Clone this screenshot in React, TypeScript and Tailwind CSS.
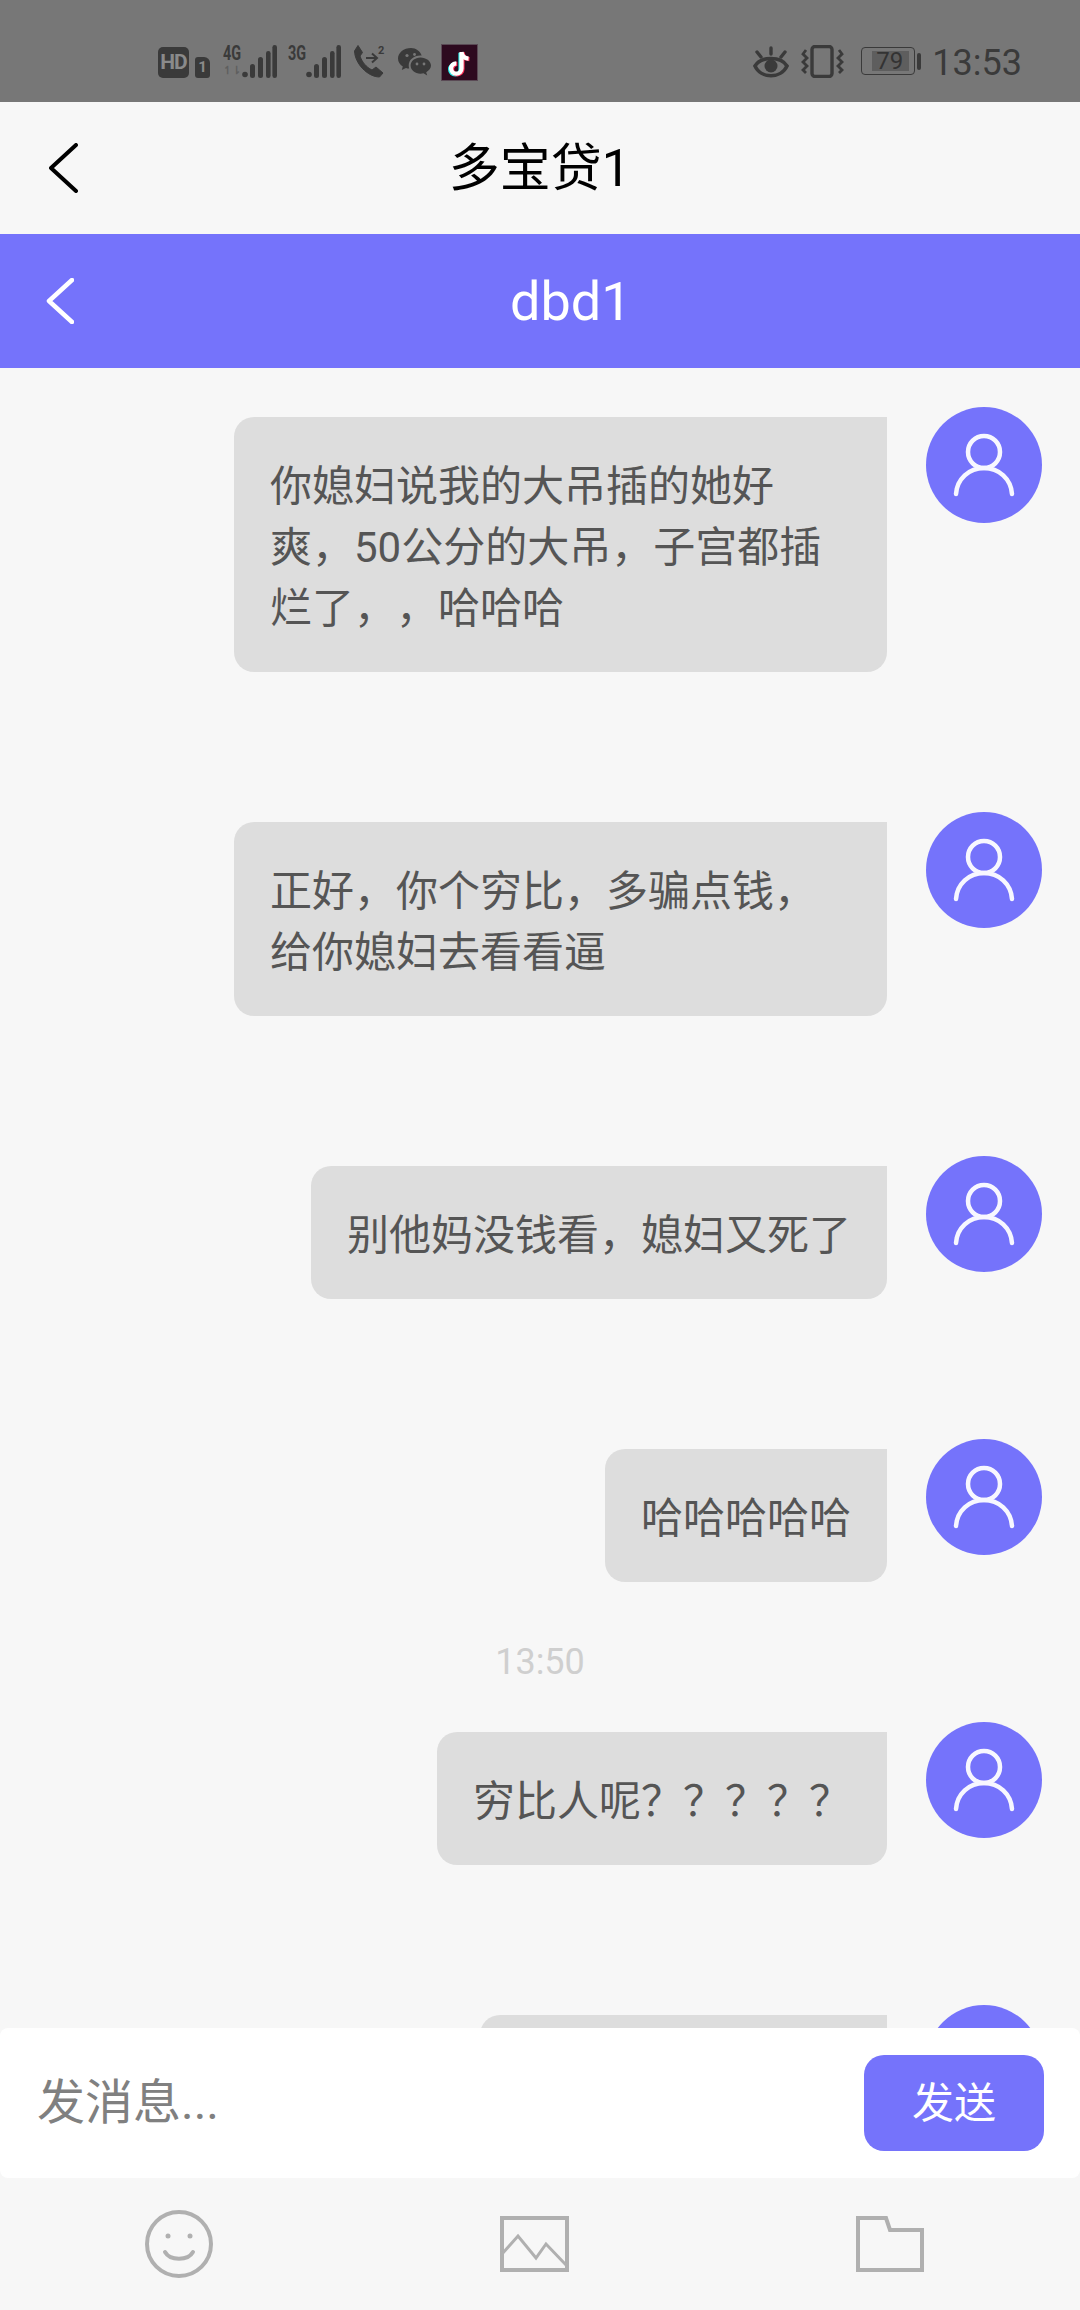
const font = { fontFamily: '"Roboto", "Noto Sans CJK SC", sans-serif' };

function Avatar() {
  return (
    <div className="w-[116px] h-[116px] rounded-full bg-[#7573fb] shrink-0">
      <svg viewBox="0 0 116 116" className="w-full h-full" fill="none" stroke="#f7f7ff" strokeWidth="4.5" strokeLinecap="round">
        <circle cx="58" cy="45" r="16" />
        <path d="M30 87C31 72 43 61 58 61C73 61 85 72 86 87" />
      </svg>
    </div>
  );
}

function Row({ className, bubble, children }: { className: string; bubble: string; children?: React.ReactNode }) {
  return (
    <div className={`flex justify-end items-start gap-[39px] pr-[38px] ${className}`}>
      <div className={`mt-[10px] bg-[#dddddd] rounded-[20px] rounded-tr-none px-[36px] pt-[39px] pb-[33px] text-[42px] leading-[61px] text-[#555555] whitespace-nowrap [font-feature-settings:'chws'_0] [text-spacing-trim:space-all] ${bubble}`}>
        {children}
      </div>
      <Avatar />
    </div>
  );
}

function Bars({ className }: { className: string }) {
  return (
    <svg viewBox="0 0 35 33" className={className} fill="#3a3a3a">
      <circle cx="3" cy="29.5" r="2.8" />
      <rect x="8" y="19" width="5" height="14" rx="2.5" />
      <rect x="16" y="12" width="5" height="21" rx="2.5" />
      <rect x="24" y="6" width="4.6" height="27" rx="2.3" />
      <rect x="30.4" y="0" width="4.6" height="33" rx="2.3" />
    </svg>
  );
}

function StatusBar() {
  return (
    <div className="h-[102px] bg-[#777777] flex justify-between items-start pl-[158px] pr-[58px] pt-[44px] text-[#3a3a3a]">
      <div className="flex items-start">
        <div className="w-[31px] h-[31px] mt-[3px] rounded-[5px] bg-[#3a3a3a] flex items-center justify-center text-[21px] tracking-[-1px] leading-none font-bold text-[#8a8a8a]">HD</div>
        <div className="w-[15px] h-[21px] mt-[13px] ml-[6px] rounded-[3px] rounded-tr-[6px] bg-[#3a3a3a] flex items-center justify-center text-[15px] leading-none font-bold text-[#8a8a8a]">1</div>
        <div className="ml-[13px] w-[18px] mt-[1px]">
          <div className="text-[20px] leading-[16px] font-bold scale-x-[0.72] origin-left whitespace-nowrap">4G</div>
          <div className="text-[11px] leading-[15px] mt-[2px] font-bold text-[#5f5f5f]">↿⇂</div>
        </div>
        <Bars className="w-[35px] h-[33px] mt-[1px] ml-[1px]" />
        <div className="ml-[11px] w-[18px] mt-[1px] text-[20px] leading-[16px] font-bold scale-x-[0.72] origin-left whitespace-nowrap">3G</div>
        <Bars className="w-[35px] h-[33px] mt-[1px]" />
        <svg viewBox="0 0 32 35" className="w-[32px] h-[35px] ml-[12px]" fill="none" stroke="#3a3a3a">
          <path d="M5 1.5L9.5 8.5L7 12C9 18 13 23 19 26L23 23L30 29L26.5 33C15 33 2 20 1.5 7Z" fill="#3a3a3a" strokeWidth="1" strokeLinejoin="round" />
          <path d="M13 14H23M19 9.5L24 14L19 18.5" strokeWidth="2" />
          <text x="25" y="10" fontSize="11" fill="#3a3a3a" stroke="none" fontWeight="bold">2</text>
        </svg>
        <svg viewBox="0 0 33 29" className="w-[33px] h-[29px] ml-[13px] mt-[4px]" fill="#3a3a3a">
          <path d="M13 0C5.8 0 0 4.7 0 10.5C0 13.8 1.9 16.7 4.8 18.6L3.8 22L8 19.9C9 20.2 10.1 20.4 11.2 20.5C10.9 19.5 10.7 18.5 10.7 17.5C10.7 11.9 15.8 7.5 22.3 7.5C22.8 7.5 23.3 7.5 23.7 7.6C22.2 3.2 18 0 13 0Z" />
          <path d="M22.5 9.5C17 9.5 12.6 13.1 12.6 17.6C12.6 22.1 17 25.7 22.5 25.7C23.5 25.7 24.6 25.5 25.5 25.3L29.2 27.5L28.2 24.2C31 22.7 33 20.3 33 17.6C33 13.1 28 9.5 22.5 9.5Z" />
          <circle cx="9" cy="7.5" r="1.6" fill="#777777" />
          <circle cx="16.5" cy="6.5" r="1.4" fill="#777777" />
          <circle cx="19" cy="16" r="1.4" fill="#777777" />
          <circle cx="26" cy="16" r="1.4" fill="#777777" />
        </svg>
        <div className="w-[37px] h-[37px] ml-[10px] bg-[#2d0a1f] border border-[#5a4a55] flex items-center justify-center">
          <svg viewBox="0 0 24 28" className="w-[25px] h-[28px]" fill="none" strokeWidth="4.2">
            <path d="M14 3V19.5A5.2 5.2 0 1 1 8.8 14.3" stroke="#25f4ee" transform="translate(-1 0.8)" />
            <path d="M14 3C14.5 7 17 9.3 21 9.6" stroke="#fe2c55" transform="translate(1 0.6)" />
            <path d="M14 3V19.5A5.2 5.2 0 1 1 8.8 14.3" stroke="#fe2c55" transform="translate(1 0.6)" />
            <path d="M14 3V19.5A5.2 5.2 0 1 1 8.8 14.3M14 3C14.5 7 17 9.3 21 9.6" stroke="#ffffff" />
          </svg>
        </div>
      </div>
      <div className="flex items-start">
        <svg viewBox="0 0 36 32" className="w-[36px] h-[32px] mt-[2px]" fill="none" stroke="#3a3a3a" strokeWidth="3.4" strokeLinecap="round">
          <path d="M2 20C8 10 28 10 34 20C28 33 8 33 2 20Z" strokeWidth="3.6" />
          <circle cx="18" cy="20" r="6.5" fill="#3a3a3a" stroke="none" />
          <path d="M18 2V8M4 6L8 11M32 6L28 11" />
        </svg>
        <svg viewBox="0 0 43 33" className="w-[43px] h-[33px] ml-[12px] mt-[1px]" fill="none" stroke="#3a3a3a">
          <rect x="11" y="1.5" width="20" height="30" rx="3" strokeWidth="3.4" />
          <path d="M5 5L2 9L6 13L2 17L6 21L2 25L5 28M38 5L41 9L37 13L41 17L37 21L41 25L38 28" strokeWidth="2.8" />
        </svg>
        <div className="ml-[17px] mt-[3px] w-[54px] h-[28px] rounded-[4px] border border-[#3a3a3a] relative">
          <div className="absolute left-[10px] top-[3px] bottom-[3px] w-[37px] bg-[#5e5e5e]" />
          <div className="absolute inset-0 pl-[14px] text-[24px] leading-[26px] text-[#333333]">79</div>
        </div>
        <div className="ml-[2px] mt-[9px] w-[4px] h-[17px] rounded-[2px] bg-[#3a3a3a]" />
        <div className="ml-[11px] text-[36px] leading-[38px] text-[#3a3a3a]">13:53</div>
      </div>
    </div>
  );
}

export default function App() {
  return (
    <div style={font} className="w-[1080px] h-[2310px] bg-[#f7f7f7] flex flex-col overflow-hidden">
      <StatusBar />
      <div className="h-[132px] shrink-0 grid grid-cols-[1fr_auto_1fr] items-center pl-[49px] text-black">
        <svg viewBox="0 0 29 50" className="w-[29px] h-[50px]" fill="none" stroke="#000" strokeWidth="4" strokeLinecap="round" strokeLinejoin="round">
          <path d="M27 2L2 25L27 48" />
        </svg>
        <div className="text-[51px] leading-none -translate-x-[25px]">多宝贷1</div>
        <div />
      </div>
      <div className="h-[134px] shrink-0 bg-[#7573fb] flex items-center pl-[46px] text-white">
        <svg viewBox="0 0 28 46" className="w-[28px] h-[46px]" fill="none" stroke="#fff" strokeWidth="4.5" strokeLinecap="round" strokeLinejoin="round">
          <path d="M26 2L3 23L26 44" />
        </svg>
        <div className="ml-[436px] mt-[2px] text-[54px] leading-none">dbd1</div>
      </div>
      <div className="flex-1 min-h-0 overflow-hidden pt-[39px]">
        <Row className="mb-[140px]" bubble="w-[653px]">
          你媳妇说我的大吊插的她好<br />爽，50公分的大吊，子宫都插<br />烂了，，哈哈哈
        </Row>
        <Row className="mb-[140px]" bubble="w-[653px]">
          正好，你个穷比，多骗点钱，<br />给你媳妇去看看逼
        </Row>
        <Row className="mb-[140px]" bubble="">别他妈没钱看，媳妇又死了</Row>
        <Row className="mb-[60px]" bubble="">哈哈哈哈哈</Row>
        <div className="h-[40px] mb-[40px] text-center text-[36px] leading-[40px] text-[#cfcfcf]">13:50</div>
        <Row className="mb-[140px]" bubble="">穷比人呢？？？？？</Row>
        <Row className="" bubble="w-[407px] h-[133px]" />
      </div>
      <div className="h-[150px] shrink-0 bg-white rounded-[8px] flex items-center justify-between pl-[37px] pr-[36px]">
        <div className="text-[48px] leading-none text-[#808080]">发消息...</div>
        <div className="w-[180px] h-[96px] rounded-[20px] bg-[#7573fb] flex items-center justify-center text-[42px] text-white">发送</div>
      </div>
      <div className="h-[132px] shrink-0 flex justify-between items-center pl-[145px] pr-[156px]">
        <svg viewBox="0 0 68 68" className="w-[68px] h-[68px]" fill="none" stroke="#b0b0b0" strokeWidth="4">
          <circle cx="34" cy="34" r="32" />
          <circle cx="23" cy="26" r="2.5" fill="#b0b0b0" stroke="none" />
          <circle cx="45" cy="26" r="2.5" fill="#b0b0b0" stroke="none" />
          <path d="M20 42C25 51 43 51 48 42" strokeLinecap="round" />
        </svg>
        <svg viewBox="0 0 69 56" className="w-[69px] h-[56px]" fill="none" stroke="#b0b0b0" strokeWidth="4">
          <rect x="2" y="2" width="65" height="52" />
          <path d="M2 38L18 20L36 42L46 28L67 50" strokeWidth="3" />
        </svg>
        <svg viewBox="0 0 68 56" className="w-[68px] h-[56px]" fill="none" stroke="#b0b0b0" strokeWidth="4">
          <path d="M2 2H30L34 14H66V54H2Z" />
        </svg>
      </div>
    </div>
  );
}
